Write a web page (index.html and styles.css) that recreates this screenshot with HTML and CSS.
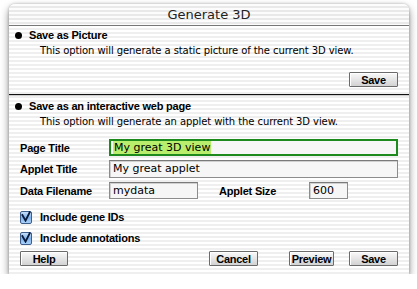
FILE: index.html
```html
<!DOCTYPE html>
<html lang="en">
  <head>
    <meta charset="UTF-8" />
    <title>Generate 3D</title>
    <link rel="stylesheet" href="styles.css">
  </head>
  <body>
    <div class="window">
      <div class="titlebar">Generate 3D</div>
      <div class="content">
        <div class="section first">
          <div class="option"><span class="bullet"></span>Save as Picture</div>
          <div class="desc">This option will generate a static picture of the current 3D view.</div>
          <div class="btn-row right">
            <button class="btn w-save">Save</button>
          </div>
        </div>
        <div class="divider"></div>
        <div class="section second">
          <div class="option"><span class="bullet"></span>Save as an interactive web page</div>
          <div class="desc">This option will generate an applet with the current 3D view.</div>

          <div class="form-row row-page">
            <label class="label">Page Title</label>
            <div class="field focused wide"><span class="sel">My great 3D view</span></div>
          </div>
          <div class="form-row row-applet">
            <label class="label">Applet Title</label>
            <div class="field wide">My great applet</div>
          </div>
          <div class="form-row row-data">
            <label class="label">Data Filename</label>
            <div class="field small">mydata</div>
            <label class="label label-size">Applet Size</label>
            <div class="field tiny">600</div>
          </div>

          <div class="check-row first-check">
            <span class="checkbox"><svg width="11" height="11" viewBox="0 0 11 11"><path d="M1 3 L5 10 L10 0" fill="none" stroke="#0a1a3a" stroke-width="2"/></svg></span>
            Include gene IDs
          </div>
          <div class="check-row">
            <span class="checkbox"><svg width="11" height="11" viewBox="0 0 11 11"><path d="M1 3 L5 10 L10 0" fill="none" stroke="#0a1a3a" stroke-width="2"/></svg></span>
            Include annotations
          </div>

          <div class="btn-row bottom">
            <button class="btn w-help">Help</button>
            <span class="spacer"></span>
            <button class="btn w-cancel">Cancel</button>
            <button class="btn w-preview">Preview</button>
            <button class="btn w-save">Save</button>
          </div>
        </div>
      </div>
    </div>
  </body>
</html>
```

FILE: styles.css
```css
body {
  margin: 0;
  background-color: #fff;
  font-family: "DejaVu Sans", "Liberation Sans", sans-serif;
  color: #000;
}
.window {
  margin: 4px 0 0 9px;
  width: 400px;
  height: 270px;
  border-radius: 6px 6px 0 0;
  box-shadow: 0 4px 9px rgba(0, 0, 0, 0.45), 0 0 3px rgba(0, 0, 0, 0.25);
  display: flex;
  flex-direction: column;
  overflow: hidden;
}
.titlebar {
  height: 21px;
  line-height: 21px;
  text-align: center;
  font-size: 13px;
  color: #222;
  border-bottom: 1px solid #777;
  background: repeating-linear-gradient(to bottom, #fcfcfc 0, #fcfcfc 2px, #e9e9e9 2px, #e9e9e9 4px);
}
.content {
  flex: 1;
  background: repeating-linear-gradient(to bottom, #ffffff 0, #ffffff 2px, #efefef 2px, #efefef 4px);
}
.section {
  padding: 0 11px 0 11px;
}
.first {
  padding-top: 2px;
}
.second {
  padding-top: 3px;
}
.option {
  display: flex;
  align-items: center;
  height: 14px;
  font-family: "Liberation Sans", sans-serif;
  font-weight: bold;
  font-size: 11px;
  letter-spacing: -0.2px;
  margin-left: -5px;
}
.bullet {
  width: 7px;
  height: 7px;
  border-radius: 50%;
  background-color: #000;
  margin-right: 7px;
}
.desc {
  height: 14px;
  line-height: 14px;
  margin-top: 2px;
  padding-left: 20px;
  font-size: 10px;
  letter-spacing: -0.08px;
}
.btn-row {
  display: flex;
  align-items: center;
}
.btn-row.right {
  justify-content: flex-end;
  margin-top: 14px;
}
.btn {
  height: 15px;
  padding: 0;
  font-family: "Liberation Sans", sans-serif;
  font-weight: bold;
  font-size: 11px;
  letter-spacing: -0.3px;
  color: #000;
  border: 1px solid #6b6b6b;
  border-radius: 1px;
  background: linear-gradient(to bottom, #fafafa 0%, #e4e4e4 55%, #d2d2d2 100%);
  box-shadow: inset 1px 1px 0 #fff;
}
.w-save {
  width: 49px;
}
.w-help {
  width: 48px;
}
.w-cancel {
  width: 49px;
}
.w-preview {
  width: 45px;
  margin-left: 31px;
}
.btn-row .w-preview + .w-save {
  margin-left: 15px;
}
.spacer {
  flex: 1;
}
.divider {
  margin-top: 7px;
  height: 1px;
  background-color: #111;
  border-bottom: 1px solid #cfcfcf;
}
.form-row {
  display: flex;
  align-items: center;
}
.row-page {
  margin-top: 10px;
}
.row-applet {
  margin-top: 4px;
}
.row-data {
  margin-top: 4px;
}
.label {
  width: 89px;
  font-family: "Liberation Sans", sans-serif;
  font-weight: bold;
  font-size: 11px;
  letter-spacing: -0.2px;
}
.label-size {
  margin-left: 21px;
  width: 90px;
}
.field {
  box-sizing: border-box;
  height: 18px;
  line-height: 14px;
  padding: 1px 3px;
  font-size: 11px;
  background-color: #f6f6f6;
  border: 1px solid #8c8c8c;
  border-top-color: #7a7a7a;
  box-shadow: inset 1px 1px 0 #d0d0d0;
}
.wide {
  width: 289px;
}
.small {
  width: 89px;
  height: 17px;
}
.tiny {
  width: 39px;
  height: 17px;
}
.focused {
  height: 17px;
  border: 2px solid #1d8a1d;
  box-shadow: none;
  padding: 0 2px;
}
.sel {
  background-color: #b8ee6c;
  padding: 0 1px;
}
.check-row {
  display: flex;
  align-items: center;
  height: 14px;
  font-family: "Liberation Sans", sans-serif;
  font-weight: bold;
  font-size: 11px;
  letter-spacing: -0.2px;
  margin-top: 7px;
}
.first-check {
  margin-top: 11px;
}
.checkbox {
  box-sizing: border-box;
  width: 12px;
  height: 13px;
  margin-right: 8px;
  border: 1px solid #3d5d8a;
  border-radius: 2px;
  background: linear-gradient(to bottom, #c6e0fb 0%, #7fb2ec 50%, #a9d0f8 100%);
  display: flex;
  align-items: flex-start;
  justify-content: center;
}
.checkbox svg {
  margin-top: -1px;
}
.btn-row.bottom {
  margin-top: 6px;
}
```
